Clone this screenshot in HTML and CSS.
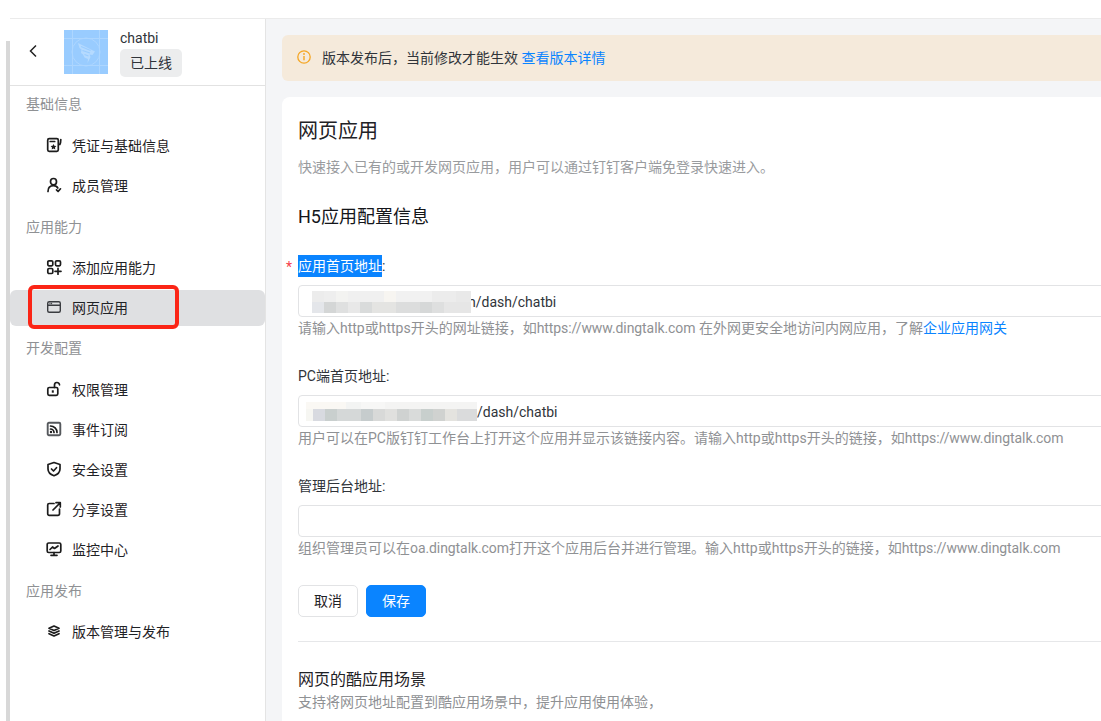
FILE: index.html
```html
<!DOCTYPE html>
<html lang="zh-CN">
<head>
<meta charset="utf-8">
<title>网页应用</title>
<link rel="stylesheet" href="styles.css">
</head>
<body>
<div class="topstrip"><div class="topline"></div></div>
<div class="shell">
  <div class="rail"><div class="scrollbar"></div></div>
  <aside class="sidebar">
    <header class="apphead">
      <svg class="back" viewBox="0 0 10 14" width="10" height="14"><path d="M8 1.5 2.5 7 8 12.5" fill="none" stroke="#222" stroke-width="1.5"/></svg>
      <svg class="logo" viewBox="0 0 44 44" width="44" height="44">
        <rect width="44" height="44" fill="#99ccff"/>
        <path d="M0 8.500H44M0 35.500H44M8.500 0V44M35.500 0V44" stroke="#add6ff" stroke-width="1"/>
        <circle cx="22" cy="22" r="14" fill="none" stroke="#add6ff" stroke-width="1"/>
        <path d="M14 13 31 21.500 28.500 25 25.500 24.500 26.500 27 23.500 33 24 29 20.500 27.500 19 24.500 17 23 17.500 19.500 15.500 18Z" fill="#b5daff"/>
        <path d="M17 16.500 26.500 20.500M18.500 20.500 26 23M20.500 24.500 24.500 26" stroke="#99ccff" stroke-width="1.100" fill="none"/>
      </svg>
      <div class="appmeta">
        <div class="appname">chatbi</div>
        <div class="apptag">已上线</div>
      </div>
    </header>
    <nav class="nav">
      <div class="grouplabel first">基础信息</div>
      <a class="navitem"><svg class="ico" viewBox="0 0 16 16"><rect x="1.700" y="1.700" width="10.600" height="12.600" rx="1.500"/><path d="M14.800 2.500c0 2-.2 3.500-1 5"/><path class="fill" d="m7.500 7 .9 1.800 2 .3-1.400 1.400.3 2-1.800-.9-1.800.9.300-2-1.400-1.400 2-.3z"/><path d="M4.200 4.500h4.500"/></svg><span>凭证与基础信息</span></a>
      <a class="navitem"><svg class="ico" viewBox="0 0 16 16"><ellipse cx="7.500" cy="4.700" rx="3" ry="3.200"/><path d="M2 14.500c0-3.500 2-5.800 5.500-5.800 2 0 3.500 .8 4.300 2.300"/><path d="m10.500 12.800 1.600 1.700 2.400-2.700"/></svg><span>成员管理</span></a>
      <div class="grouplabel">应用能力</div>
      <a class="navitem"><svg class="ico" viewBox="0 0 16 16"><rect x="1.800" y="1.800" width="5" height="5" rx="1.200"/><rect x="9.500" y="1.800" width="5" height="5" rx="1.200"/><rect x="1.800" y="9.500" width="5" height="5" rx="1.200"/><path d="M12 9.300v6M9 12.300h6"/></svg><span>添加应用能力</span></a>
      <a class="navitem active"><svg class="ico thin" viewBox="0 0 16 16"><rect x="1.700" y="2.700" width="12.600" height="10.600" rx="1.500"/><path d="M1.700 6.300h12.600"/><path d="M3.500 4.500h3" stroke-dasharray="1 .6" stroke-linecap="butt"/></svg><span>网页应用</span></a>
      <div class="grouplabel dev">开发配置</div>
      <a class="navitem"><svg class="ico" viewBox="0 0 16 16"><rect x="1.800" y="6.500" width="10" height="7.800" rx="1.500"/><path d="M8.500 6.500V4.200a2.500 2.500 0 0 1 5-.4"/><path class="fill" d="M5.800 9.300h2v2.400h-2z"/></svg><span>权限管理</span></a>
      <a class="navitem"><svg class="ico" viewBox="0 0 16 16"><rect class="grey" x="1.700" y="1.700" width="12.600" height="12.600" rx="1.200"/><path d="M4.500 5a6.500 6.500 0 0 1 6.500 6.500M4.500 8a3.500 3.500 0 0 1 3.500 3.500"/><circle class="fill" cx="5" cy="11" r="1.200"/></svg><span>事件订阅</span></a>
      <a class="navitem"><svg class="ico" viewBox="0 0 16 16"><path d="M8 1.500 14 3.500V8c0 3.500-2.500 5.500-6 6.700C4.500 13.500 2 11.500 2 8V3.500z"/><path d="m5.500 8 2 2 3-3.300"/></svg><span>安全设置</span></a>
      <a class="navitem"><svg class="ico" viewBox="0 0 16 16"><path d="M8 2.500H3.200a1.500 1.500 0 0 0-1.500 1.500v8.800a1.500 1.500 0 0 0 1.500 1.500H12a1.500 1.500 0 0 0 1.500-1.500V8"/><path d="M7 9 14 2M10 1.700h4.300V6"/></svg><span>分享设置</span></a>
      <a class="navitem"><svg class="ico" viewBox="0 0 16 16"><rect x="1.200" y="2" width="13.600" height="9.500" rx="1.500"/><path d="M5 14.300h6M8 11.500v2.800"/><path d="m4 8.500 2.500-2.500 2 1.500L12 5"/></svg><span>监控中心</span></a>
      <div class="grouplabel">应用发布</div>
      <a class="navitem"><svg class="ico" viewBox="0 0 16 16"><path d="M8 3 13 5.300 8 7.600 3 5.300z"/><path d="M3 8 8 10.300 13 8M3 10.700 8 13 13 10.700"/></svg><span>版本管理与发布</span></a>
    </nav>
    <div class="redbox"></div>
  </aside>
  <main class="main">
    <div class="banner">
      <svg class="info" viewBox="0 0 14 14" width="14" height="14"><circle cx="7" cy="7" r="6.200" fill="none" stroke="#f5a623" stroke-width="1.300"/><path d="M7 6v4.200" stroke="#f5a623" stroke-width="1.400"/><circle cx="7" cy="4" r=".9" fill="#f5a623"/></svg>
      <span>版本发布后，当前修改才能生效 <a class="link">查看版本详情</a></span>
    </div>
    <section class="card">
      <h1 class="title">网页应用</h1>
      <p class="desc">快速接入已有的或开发网页应用，用户可以通过钉钉客户端免登录快速进入。</p>
      <h2 class="subtitle">H5应用配置信息</h2>
      <div class="field first">
        <label class="label"><span class="star">*</span><span class="selected">应用首页地址</span>:</label>
        <div class="input">
          <span class="val one">m/dash/chatbi</span>
          <div class="mosaic one"></div>
        </div>
        <div class="help">请输入http或https开头的网址链接，如<span class="url">https://www.dingtalk.com</span> 在外网更安全地访问内网应用，了解<a class="link">企业应用网关</a></div>
      </div>
      <div class="field">
        <label class="label">PC端首页地址:</label>
        <div class="input">
          <span class="val two">/dash/chatbi</span>
          <div class="mosaic two"></div>
        </div>
        <div class="help">用户可以在PC版钉钉工作台上打开这个应用并显示该链接内容。请输入http或https开头的链接，如<span class="url">https://www.dingtalk.com</span></div>
      </div>
      <div class="field">
        <label class="label">管理后台地址:</label>
        <div class="input"></div>
        <div class="help">组织管理员可以在<span class="url">oa.dingtalk.com</span>打开这个应用后台并进行管理。输入http或https开头的链接，如<span class="url">https://www.dingtalk.com</span></div>
      </div>
      <div class="actions">
        <button class="btn">取消</button>
        <button class="btn primary">保存</button>
      </div>
      <hr class="divider">
      <h3 class="section">网页的酷应用场景</h3>
      <p class="sectiondesc">支持将网页地址配置到酷应用场景中，提升应用使用体验，</p>
    </section>
  </main>
</div>
</body>
</html>
```
FILE: styles.css
```css
* { box-sizing: border-box; }
html, body { margin: 0; height: 100%; overflow: hidden; background: #fff; }
body {
  display: flex;
  flex-direction: column;
  font-family: "Roboto", "Noto Sans CJK SC", sans-serif;
  font-size: 14px;
  color: #1f2226;
}
.topstrip { height: 19px; flex: none; padding: 18px 0 0 10px; }
.topline { height: 1px; background: #ebebeb; }
.shell { flex: 1; min-height: 0; display: flex; }
.rail { width: 10px; flex: none; padding: 22px 0 0 6px; }
.scrollbar { width: 4px; height: 100%; background: #d8d8d8; }

.sidebar { position: relative; width: 256px; flex: none; border-right: 1px solid #e4e4e4; background: #fff; }
.apphead { height: 67px; display: flex; align-items: flex-start; border-bottom: 1px solid #e2e2e2; }
.back { margin: 25px 0 0 18px; flex: none; }
.logo { margin: 11px 0 0 26px; flex: none; display: block; }
.appmeta { margin: 10px 0 0 12px; }
.appname { font-size: 14px; line-height: 18px; color: #30343a; }
.apptag { margin-top: 2px; width: 62px; height: 28px; line-height: 28px; text-align: center; background: #ecedee; border-radius: 5px; color: #30343a; }

.nav { display: flex; flex-direction: column; gap: 4px; }
.grouplabel { height: 22px; line-height: 22px; padding-left: 16px; color: #8f9194; margin: 9px 0 7px; }
.grouplabel.first { margin-top: 7px; margin-bottom: 8px; }
.grouplabel.dev { margin: 7px 0 8px; }
.navitem { height: 36px; display: flex; align-items: center; padding-left: 36px; border-radius: 6px; color: #1f2226; }
.navitem.active { background: #dfe0e2; margin-top: 1px; padding-bottom: 2px; }
.ico { width: 16px; height: 16px; margin-right: 10px; flex: none; fill: none; stroke: #1c1c1c; stroke-width: 1.700; stroke-linecap: round; stroke-linejoin: round; }
.ico.thin { stroke: #3a3c40; stroke-width: 1.400; }
.ico .fill { fill: #1c1c1c; stroke: none; }
.ico .grey { stroke: #55585c; stroke-width: 1.900; }
.redbox { position: absolute; left: 18px; top: 266px; width: 151px; height: 44px; border: 4px solid #fb2516; border-radius: 6px; pointer-events: none; }

.main { flex: 1; min-width: 0; overflow: hidden; background: #f4f5f7; padding: 16px 0 0 16px; }
.banner { width: 900px; height: 46px; background: #f5eadb; border-radius: 6px; display: flex; align-items: center; padding: 0 0 2px 15px; color: #30343a; }
.info { margin-right: 11px; flex: none; }
.link { color: #0a84ff; }
.card { width: 900px; margin-top: 16px; background: #fff; border-radius: 8px 8px 0 0; padding: 20px 16px 40px; }
.title { margin: 0; font-size: 20px; font-weight: 400; line-height: 29px; color: #1f2226; }
.desc { margin: 11px 0 0; line-height: 20px; color: #999b9e; }
.subtitle { margin: 27px 0 0; font-size: 18px; font-weight: 400; line-height: 26px; color: #14161a; }
.field { margin-top: 26px; }
.field.first { margin-top: 25px; }
.label { position: relative; display: block; line-height: 22px; height: 22px; color: #30343a; }
.star { position: absolute; left: -12px; top: 1px; color: #f5414c; }
.selected { background: #0a84ff; color: #fff; display: inline-block; }
.input { position: relative; margin-top: 8px; height: 32px; border: 1px solid #e2e3e5; border-radius: 4px; background: #fff; color: #30343a; line-height: 32px; }
.val { position: absolute; top: 0; }
.val.one { left: 164.500px; }
.val.two { left: 178px; }
.mosaic { position: absolute; }
.mosaic.one {
  left: 13px; top: 5px; width: 159px; height: 22px;
  background:
    linear-gradient(90deg, #e4e6ea 0 12px, #d4d6d6 12px 24px, #dfe0e0 24px 36px, #e8e8e8 36px 48px, #d9dbdb 48px 60px, #e4e4e2 60px 84px, #dcdddd 84px 108px, #d6d8d8 108px 120px, #dedfdf 120px 132px, #e6e6e6 132px 159px) 0 11px / 100% 11px no-repeat,
    linear-gradient(90deg, #ececec 0 12px, #eeeeee 12px 24px, #f3f3f1 24px 36px, #f0f0f0 36px 72px, #f7f5f1 72px 84px, #f1f1f1 84px 120px, #ececec 120px 144px, #e9e9e9 144px 159px) 0 0 / 100% 11px no-repeat;
}
.mosaic.two {
  left: 7px; top: 6px; width: 171px; height: 19px;
  background:
    linear-gradient(90deg, #f6f6f2 0 7px, #d8dae0 7px 19px, #c9cfce 19px 31px, #d5d8d8 31px 55px, #c6cccd 55px 67px, #d8d9d8 67px 79px, #e0e0de 79px 91px, #cfd2d1 91px 103px, #d9dbda 103px 115px, #c8cfcd 115px 127px, #d0d2d0 127px 139px, #e4e3df 139px 151px, #dadbdc 151px 171px) 0 7px / 100% 12px no-repeat,
    linear-gradient(90deg, #faf8f4 0 40px, #f3f4f3 40px 55px, #f7f7f6 55px 79px, #f4f4f3 79px 171px) 0 0 / 100% 7px no-repeat;
}
.help { line-height: 22px; color: #8f9194; white-space: nowrap; }
.url { letter-spacing: -.08px; }
.actions { margin-top: 26px; display: flex; gap: 8px; }
.btn { width: 60px; height: 32px; padding: 0 0 2px; border: 1px solid #e2e3e5; border-radius: 5px; background: #fff; font: inherit; color: #1f2226; }
.btn.primary { background: #0a84ff; border-color: #0a84ff; color: #fff; }
.divider { margin: 24px 0 0; border: 0; border-top: 1px solid #e6e7e9; }
.section { margin: 26px 0 0; font-size: 16px; font-weight: 400; line-height: 24px; color: #1f2226; }
.sectiondesc { margin: 0; line-height: 20px; color: #8f9194; }
```
